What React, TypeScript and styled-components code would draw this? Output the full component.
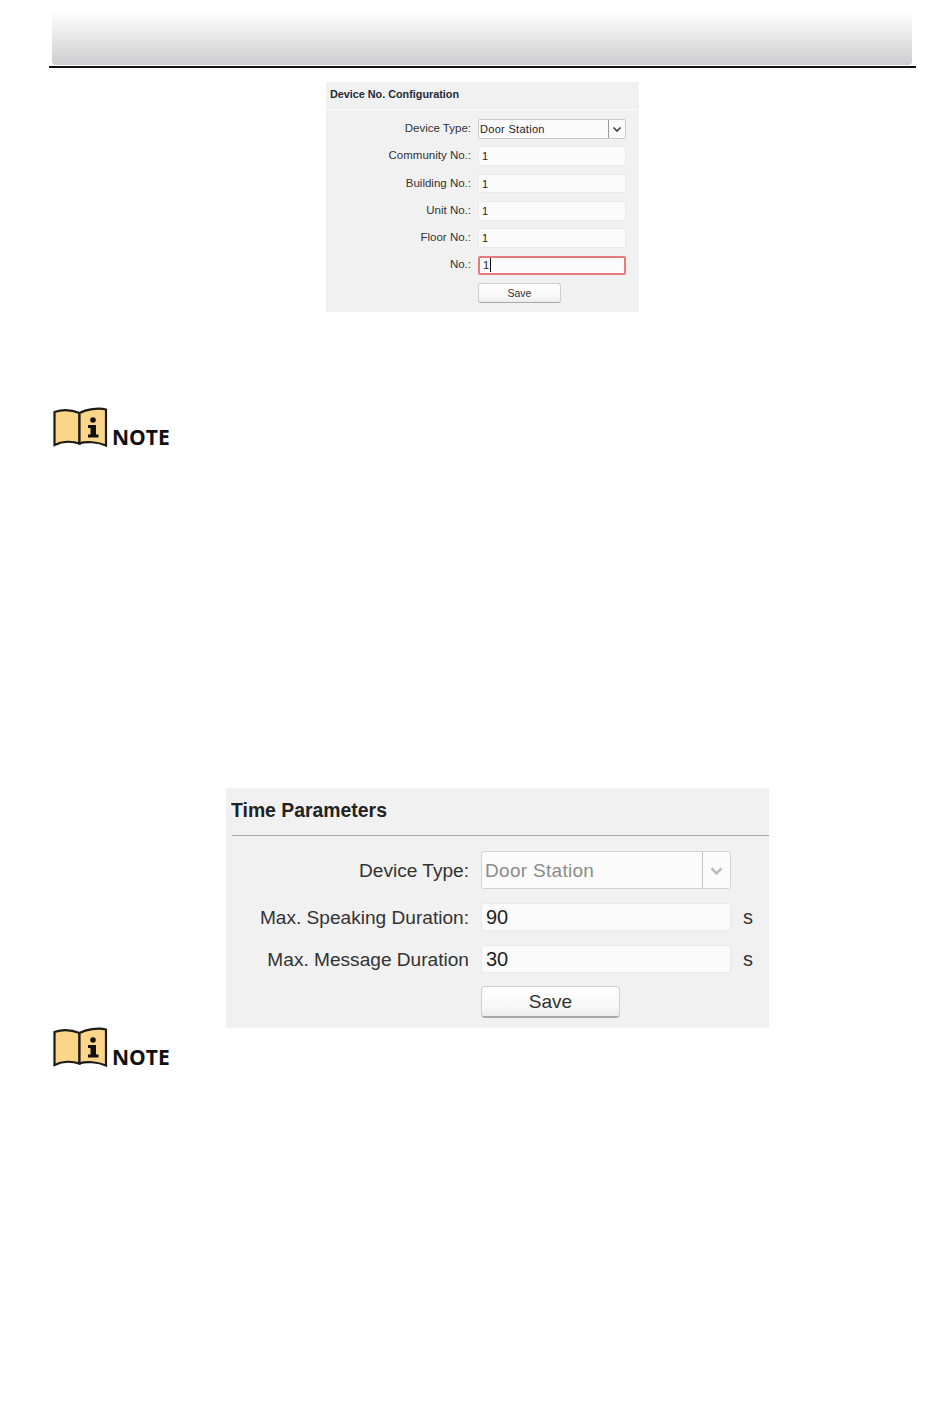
import React from 'react';
import styled, { createGlobalStyle } from 'styled-components';

const GlobalStyle = createGlobalStyle`
    html, body {
        margin: 0;
        padding: 0;
        background: #fff;
    }
    body {
        font-family: "Liberation Sans", Arial, sans-serif;
    }
`;

type Size = 'small' | 'large';

const metrics = {
    small: { font: 11.5, rowH: 19.6, gap: 7.7, radius: 2, labelW: 145, fieldW: 148, pad: 3 },
    large: { font: 19.1, rowH: 28, gap: 14, radius: 3, labelW: 243, fieldW: 250, pad: 4 },
};

function BookIcon() {
    return (
        <svg width="56" height="42" viewBox="0 0 56 42">
            <path
                d="M2.5 5 C10 2.5 20 3 27.5 6 V36.5 C20 34 10 34 2.5 38 Z"
                fill="#fbd588"
                stroke="#1c1a14"
                strokeWidth="2.2"
            />
            <path
                d="M27.5 6 C34 2.5 46 0.5 54 2.5 V38.5 C46 35 34 34 27.5 36.5 Z"
                fill="#fbd588"
                stroke="#1c1a14"
                strokeWidth="2.2"
            />
            <circle cx="41" cy="13" r="2.8" fill="#111" />
            <path d="M36 18 H44 V27.5 H46.5 V30.5 H36 V27.5 H38.5 V21 H36 Z" fill="#111" />
        </svg>
    );
}

function Chevron({ muted, size }: { muted?: boolean; size: number }) {
    return (
        <svg width={size} height={size} viewBox="0 0 12 12">
            <path
                d="M2.5 4.5 L6 8 L9.5 4.5"
                fill="none"
                stroke={muted ? '#b9b9b9' : '#444'}
                strokeWidth="1.7"
            />
        </svg>
    );
}

function Note() {
    return (
        <NoteRow>
            <BookIcon />
            <NoteText>NOTE</NoteText>
        </NoteRow>
    );
}

export default function App() {
    return (
        <Page>
            <GlobalStyle />
            <HeaderBand />
            <HeaderRule />

            <SmallPanel>
                <SmallTitle>Device No. Configuration</SmallTitle>
                <SmallForm>
                    <Row $size="small">
                        <Label $size="small">Device Type:</Label>
                        <SelectBox $size="small">
                            <SelectValue $size="small">Door Station</SelectValue>
                            <SelectArrow $size="small">
                                <Chevron size={12} />
                            </SelectArrow>
                        </SelectBox>
                    </Row>
                    {['Community No.:', 'Building No.:', 'Unit No.:', 'Floor No.:'].map((name) => (
                        <Row $size="small" key={name}>
                            <Label $size="small">{name}</Label>
                            <Field $size="small">1</Field>
                        </Row>
                    ))}
                    <Row $size="small">
                        <Label $size="small">No.:</Label>
                        <Field $size="small" $error>
                            1<Caret />
                        </Field>
                    </Row>
                    <Row $size="small">
                        <Label $size="small" />
                        <SaveButton $size="small">Save</SaveButton>
                    </Row>
                </SmallForm>
            </SmallPanel>

            <FirstNote>
                <Note />
            </FirstNote>

            <LargePanel>
                <LargeTitle>Time Parameters</LargeTitle>
                <LargeForm>
                    <TallRow>
                        <Label $size="large">Device Type:</Label>
                        <SelectBox $size="large" $disabled>
                            <SelectValue $size="large" $disabled>Door Station</SelectValue>
                            <SelectArrow $size="large" $disabled>
                                <Chevron muted size={17} />
                            </SelectArrow>
                        </SelectBox>
                    </TallRow>
                    <Row $size="large">
                        <Label $size="large">Max. Speaking Duration:</Label>
                        <Field $size="large">90</Field>
                        <Unit>s</Unit>
                    </Row>
                    <Row $size="large">
                        <Label $size="large">Max. Message Duration</Label>
                        <Field $size="large">30</Field>
                        <Unit>s</Unit>
                    </Row>
                    <Row $size="large">
                        <Label $size="large" />
                        <SaveButton $size="large">Save</SaveButton>
                    </Row>
                </LargeForm>
            </LargePanel>

            <SecondNote>
                <Note />
            </SecondNote>
        </Page>
    );
}

const Page = styled.div`
    width: 950px;
    height: 1425px;
    overflow: hidden;
    background: #fff;
`;

const HeaderBand = styled.div`
    height: 55px;
    margin: 10px 38px 0 52px;
    border-radius: 0 0 4px 4px;
    background: linear-gradient(to bottom, #ffffff 0%, #f4f4f4 25%, #e2e2e2 60%, #cdcdcf 100%);
`;

const HeaderRule = styled.div`
    height: 2px;
    margin: 1px 34px 0 49px;
    background: #111;
`;

const Panel = styled.section`
    background: #f1f1f1;
    color: #222;
`;

const SmallPanel = styled(Panel)`
    width: 313px;
    height: 230px;
    margin: 14px 0 0 326px;
`;

const LargePanel = styled(Panel)`
    width: 543px;
    height: 240px;
    margin: 339px 0 0 226px;
`;

const SmallTitle = styled.h2`
    margin: 0;
    height: 28px;
    padding-left: 4px;
    border-bottom: 1px solid #fafafa;
    box-sizing: border-box;
    font-size: 10.8px;
    line-height: 25px;
    font-weight: 700;
    color: #1f2a33;
`;

const LargeTitle = styled.h2`
    margin: 0 0 0 6px;
    height: 48px;
    box-sizing: border-box;
    border-bottom: 1px solid #a9a9a9;
    font-size: 19.4px;
    line-height: 44px;
    font-weight: 700;
    color: #222;
    text-indent: -1px;
`;

const SmallForm = styled.div`
    display: flex;
    flex-direction: column;
    gap: ${metrics.small.gap}px;
    padding-top: 9.2px;
`;

const LargeForm = styled.div`
    display: flex;
    flex-direction: column;
    gap: ${metrics.large.gap}px;
    padding-top: 15px;
`;

const Row = styled.div<{ $size: Size }>`
    display: flex;
    align-items: center;
    height: ${(p) => metrics[p.$size].rowH}px;
`;

const TallRow = styled.div`
    display: flex;
    align-items: center;
    height: 38px;
`;

const Label = styled.div<{ $size: Size }>`
    flex: none;
    width: ${(p) => metrics[p.$size].labelW}px;
    margin-right: ${(p) => (p.$size === 'small' ? 7 : 12)}px;
    margin-top: ${(p) => (p.$size === 'small' ? 0 : 2)}px;
    margin-bottom: ${(p) => (p.$size === 'small' ? 2 : 0)}px;
    text-align: right;
    font-size: ${(p) => metrics[p.$size].font}px;
    color: #333;
    white-space: nowrap;
`;

const Field = styled.div<{ $size: Size; $error?: boolean }>`
    display: flex;
    align-items: center;
    box-sizing: border-box;
    width: ${(p) => metrics[p.$size].fieldW}px;
    height: 100%;
    padding-left: ${(p) => metrics[p.$size].pad}px;
    background: #fbfbfb;
    border: ${(p) => (p.$error ? '2px solid #e77a7a' : '1px solid #e9e9e9')};
    border-radius: ${(p) => metrics[p.$size].radius}px;
    font-size: ${(p) => (p.$size === 'small' ? 11 : 20)}px;
    color: #222;
`;

const Caret = styled.span`
    display: inline-block;
    width: 1px;
    height: 14px;
    margin-left: 1px;
    background: #111;
`;

const SelectBox = styled.div<{ $size: Size; $disabled?: boolean }>`
    display: flex;
    box-sizing: border-box;
    width: ${(p) => metrics[p.$size].fieldW}px;
    height: 100%;
    background: #fbfbfb;
    border: 1px solid ${(p) => (p.$disabled ? '#d4d4d4' : '#c9c9c9')};
    border-radius: ${(p) => metrics[p.$size].radius}px;
`;

const SelectValue = styled.div<{ $size: Size; $disabled?: boolean }>`
    flex: 1;
    display: flex;
    align-items: center;
    padding-left: ${(p) => (p.$size === 'small' ? 1 : 3)}px;
    padding-top: ${(p) => (p.$size === 'small' ? 0 : 2)}px;
    font-size: ${(p) => (p.$size === 'small' ? 11 : 19)}px;
    letter-spacing: 0.3px;
    color: ${(p) => (p.$disabled ? '#8b8b8b' : '#222')};
`;

const SelectArrow = styled.div<{ $size: Size; $disabled?: boolean }>`
    flex: none;
    display: flex;
    align-items: center;
    justify-content: center;
    width: ${(p) => (p.$size === 'small' ? 16 : 27)}px;
    border-left: 1px solid ${(p) => (p.$disabled ? '#c4c4c4' : '#999')};
`;

const SaveButton = styled.button<{ $size: Size }>`
    box-sizing: border-box;
    width: ${(p) => (p.$size === 'small' ? 83 : 139)}px;
    height: ${(p) => (p.$size === 'small' ? 20 : 32)}px;
    margin-top: ${(p) => (p.$size === 'small' ? 0 : 2)}px;
    padding: 0;
    background: linear-gradient(to bottom, #ffffff 0%, #f7f7f7 70%, #ececec 100%);
    border: 1px solid #cfcfcf;
    border-bottom: ${(p) => (p.$size === 'small' ? 1 : 2)}px solid #a9a9a9;
    border-radius: ${(p) => (p.$size === 'small' ? 3 : 4)}px;
    font-family: inherit;
    font-size: ${(p) => (p.$size === 'small' ? 10.5 : 19)}px;
    color: #333;
`;

const Unit = styled.div`
    margin-left: 12px;
    font-size: 20px;
    color: #333;
`;

const FirstNote = styled.div`
    margin-top: 95px;
`;

const SecondNote = styled.div`
    margin-top: -1px;
`;

const NoteRow = styled.div`
    display: flex;
    align-items: flex-end;
    height: 42px;
    padding-left: 52px;
`;

const NoteText = styled.span`
    margin: 0 0 -2px 4px;
    font-family: "Open Sans", sans-serif;
    font-size: 21px;
    line-height: 28px;
    font-weight: 700;
    color: #111;
`;
